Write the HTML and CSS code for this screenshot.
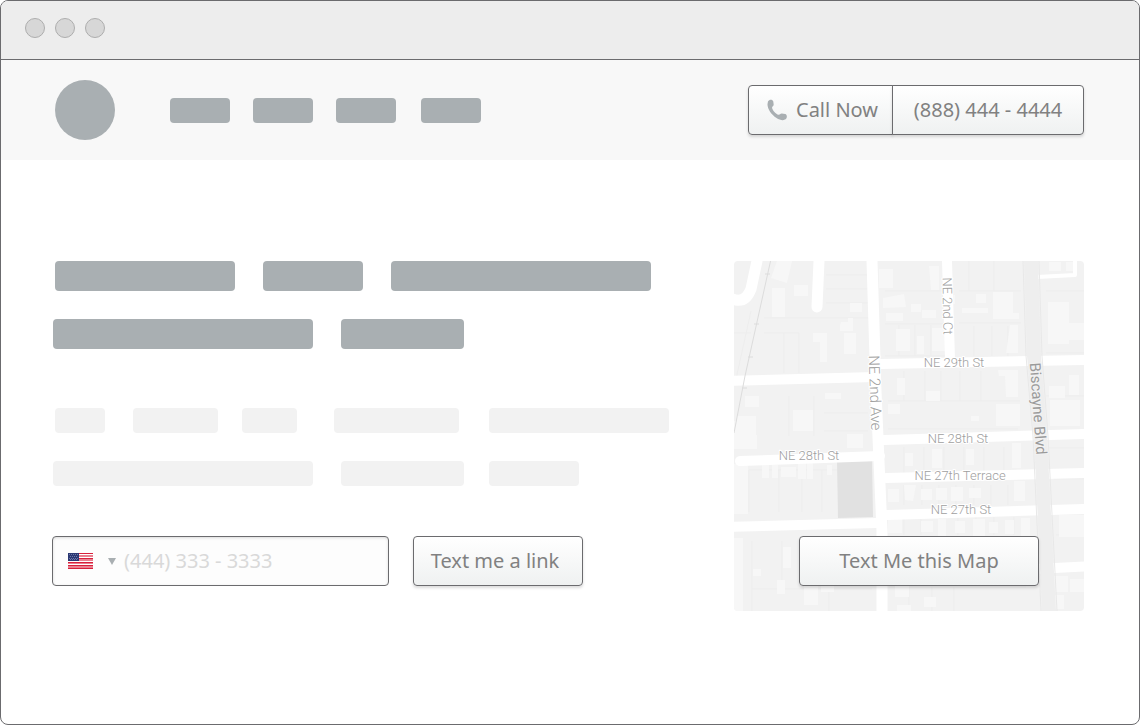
FILE: index.html
```html
<!DOCTYPE html>
<html lang="en">
<head>
<meta charset="utf-8">
<meta name="viewport" content="width=device-width, initial-scale=1">
<title>Text me a link</title>
<link rel="stylesheet" href="styles.css">
</head>
<body>
<div class="window">
  <div class="titlebar"><span class="dot"></span><span class="dot"></span><span class="dot"></span></div>
  <header class="header">
    <div class="logo"></div>
    <div class="nav">
      <span class="bar w60"></span><span class="bar w60"></span><span class="bar w60"></span><span class="bar w60"></span>
    </div>
    <div class="call">
      <button class="btn call-now" type="button">
        <svg class="phone" viewBox="0 0 22 22" aria-hidden="true"><path d="M1 2C2.500-.2 5.800-.3 6.600 2.200L7 5.200C7.100 7 5.300 7 5.300 8.300C5.600 11.500 9.500 15.300 12 16C13.500 16.300 13.500 14.700 15.500 14.700L19 15.300C21.500 16 21.200 19.500 19.500 20.800C17.500 22.300 13.500 21.800 10 19.500C4.500 15.800.5 10 .5 5Z"/></svg>Call Now
      </button>
      <button class="btn number" type="button">(888) 444 - 4444</button>
    </div>
  </header>
  <main class="main">
    <section class="copy">
      <div class="row title-row"><span class="bar w180"></span><span class="bar w100"></span><span class="bar w260"></span></div>
      <div class="row title-row second"><span class="bar w260"></span><span class="bar w123"></span></div>
      <div class="row text-row"><span class="bar w50"></span><span class="bar w85"></span><span class="bar w55"></span><span class="bar w125"></span><span class="bar w180"></span></div>
      <div class="row text-row second"><span class="bar w260"></span><span class="bar w123"></span><span class="bar w90"></span></div>
      <form class="form">
        <div class="field">
          <button class="country" type="button" aria-label="Country: United States">
            <svg class="flag" viewBox="0 0 25 16" aria-hidden="true">
              <path fill="#fff" d="M0 0h25v16H0z"/>
              <path fill="#d9203c" d="M0 0h25v1H0zM0 9h25v1H0zM0 12h25v1H0zM0 15h25v1H0zM11 5h14v1H11z"/>
              <path fill="#e8808f" d="M11 2h14v2H11zM11 6h14v2H11zM0 10h25v1H0zM0 13h25v2H0z"/>
              <path fill="#2b3873" d="M0 0h11v8H0z"/>
              <path stroke="#6f78a8" stroke-dasharray="1 1" d="M1 1.500h9M2 3.500h8M1 5.500h9M2 6.500h8"/>
            </svg>
            <svg class="caret" viewBox="0 0 8 7" aria-hidden="true"><path d="M0 0h8L4 7z"/></svg>
          </button>
          <input class="phone-input" type="tel" placeholder="(444) 333 - 3333" aria-label="Phone number">
        </div>
        <button class="btn link-btn" type="button">Text me a link</button>
      </form>
    </section>
    <section class="map">
      <svg class="map-art" viewBox="0 0 350 350" role="img" aria-label="Street map">
        <path class="land" d="M0 0h350v350H0z"/>
        <path class="pale" d="M0 160h14v14h9v14H0zM0 277h9v73H0zM0 203h14v50H0z"/>
        <path class="lots" d="M0 72h17M30 57h105M30 72h35v40M50 72v40M92 28h45M92 42h45M92 14h45M17 50L2 118M55 135v40M80 135v40M90 152h44M90 170h44M15 209v42M45 209v42M68 209v42M88 209v42M15 209h88M18 280v70M48 280v48M95 278v72M18 328h120M151 30h60M151 63h60M151 95h60M165 64v31M181 64v31M197 64v31M225 30h62M225 62h62M235 0v30M260 0v30M240 65v30M258 65v30M274 65v30M154 140h132M170 110v30M191 110v30M207 110v30M226 110v30M247 110v30M154 168h130M170 186v28M190 186v28M210 186v28M230 186v28M250 186v28M270 186v28M170 224v20M188 224v20M205 224v20M222 224v20M240 224v20M257 224v20M274 224v20M170 256v18M187 256v18M206 256v18M224 256v18M242 256v18M260 256v18M280 256v18M312 30h38M312 92h38M312 135h38M314 187h36M320 218h30M322 274h28M155 326h137M175 326v24M198 326v24M220 326v24"/>
        <path class="building" d="M43 0h15l-5 22-16-5zM60 24h14v11H60zM38 27h13v29H38zM116 42h12v9h-12zM107 61h7v-4h5v13h-13v-6zM110 72h12v21h-12zM79 72h14v29h-7V81h-7zM11 135h14v11H11zM91 132h16v6H91zM59 149h20v21H59zM113 173h16v14h-16zM3 155h19v30H3zM145 8h14v19h-14zM149 37l21-4 2 13-23 1zM152 52h17v8h-17zM162 68h14v22h-14zM183 75h7v18h-7zM198 67h13v23h-13zM177 43h10v8h-10zM188 49h14v8h-14zM195 5h10v24h-8zM212 34h9v9h-9zM228 47h26v5h-26zM242 33h10v9h-10zM259 31h20v21h6v6h-26zM276 64h8v28h-12zM314 41h21v42h-21zM335 62h15v17h-15zM315 1h12v9h-12zM332 1h8v9h-8zM163 117h8v17h-8zM192 130h14v10h-14zM237 155h8v5h-8zM264 109h20v27h-12l-1-21h-6zM262 143h24v22h-24zM315 125h16v12h-16zM335 114h10v20h-10zM316 139h30v26h-30zM154 143h12v10h-12zM171 192h8v13h-8zM198 188h10v19h-10zM232 188h8v16h-8zM278 182h9v25h-9zM28 204h7v13h-7zM38 204h6v13h-6zM47 206h15v10H47zM64 202h8v16h-8zM73 202h6v16h-6zM93 204h5v10h-5zM154 228h11v13h-11zM170 224h12l-3 16-8-1zM187 228h11v11h-11zM202 227h11v12h-11zM217 226h12v14h-12zM235 227h12v10h-12zM280 220h11v20h-11zM154 258h14v14h-14zM187 260h12v11h-12zM204 258h8v17h-8zM221 260h10v12h-10zM239 258h12v17h-12zM255 261h9v11h-9zM271 259h9v14h-9zM287 257h9v18h-9zM325 254h25v22h-25zM49 286h8v21h-8zM19 308h8v7h-8zM43 319h8v14h-8zM70 322h14v22H70zM87 315h13v16H87zM106 308h12v8h-12zM161 322h14v14h-14zM181 315h17v6h-17zM318 315h16v16h-16zM336 318h14v13h-14zM315 334h15v14h-15zM163 344h14v6h-14zM190 336h12v10h-12z"/>
        <path class="park" d="M103 199l35-1 1 58-35 1z"/>
        <g class="streets">
          <path stroke-width="11" d="M23 0L17 28Q12 41 2 39L-2 38M85 0L83 46"/>
          <path stroke-width="11" d="M138 0l4 130 6 140v80" />
          <path stroke-width="10" d="M213 0l3 98M147 103l203-4M6 200l140-5M150 179l200-6M152 217l198-5M153 254l197-6M-5 120l146-4M-5 266l148-4M280 309l80-4"/>
          <path stroke-width="4" d="M303 16l38-2V0"/>
        </g>
        <path class="boulevard" d="M290 0h14l3 95 6 80 9 175h-14l-8-175-7-80z"/>
        <path class="edge" d="M289 0l3 95 7 80 8 175M305 0l3 95 6 80 9 175"/>
        <path class="rail" d="M37-2L11 115 0 172M31 13h5M20 63h5M14 96h5M8 127h5"/>
        <g class="labels">
          <text x="220" y="106">NE 29th St</text>
          <text x="224" y="182">NE 28th St</text>
          <text x="75" y="199">NE 28th St</text>
          <text x="226" y="219">NE 27th Terrace</text>
          <text x="227" y="253">NE 27th St</text>
          <text transform="translate(209 45) rotate(89)">NE 2nd Ct</text>
          <text class="ave" transform="translate(136 132) rotate(88)">NE 2nd Ave</text>
          <text class="blvd" transform="translate(299 148) rotate(86)">Biscayne Blvd</text>
        </g>
      </svg>
      <button class="btn map-btn" type="button">Text Me this Map</button>
    </section>
  </main>
</div>
</body>
</html>
```
FILE: styles.css
```css
* { box-sizing: border-box; }
body { margin: 0; background: #fff; font-family: "Noto Sans", "Open Sans", sans-serif; }
.window { display: flex; flex-direction: column; min-height: 100vh; border: 1px solid #6b6b6e; border-radius: 8px; overflow: hidden; background: #fff; }
.titlebar { display: flex; gap: 10px; height: 59px; padding: 17px 24px; background: #ededed; border-bottom: 1px solid #6b6b6e; }
.dot { width: 20px; height: 20px; border: 1px solid #adadad; border-radius: 50%; background: #d7d7d7; }
.header { display: flex; align-items: center; height: 100px; padding: 0 55px 0 54px; background: #f8f8f8; }
.logo { width: 60px; height: 60px; margin-right: 55px; border-radius: 50%; background: #a9afb2; }
.nav { display: flex; gap: 23px; }
.nav .bar:last-child { margin-left: 2px; }
.bar { display: block; flex: none; height: 25px; border-radius: 4px; background: #a9afb2; }
.w50 { width: 50px; } .w55 { width: 55px; } .w60 { width: 60px; } .w85 { width: 85px; }
.w90 { width: 90px; } .w100 { width: 100px; } .w123 { width: 123px; } .w125 { width: 125px; }
.w180 { width: 180px; } .w260 { width: 260px; }
.btn { height: 50px; padding: 0; border: 1px solid #6b6b6e; border-radius: 4px; background: linear-gradient(#fff, #eff1f1); box-shadow: 0 2px 3px rgba(0, 0, 0, .14); color: #818181; font: 20px/28px "Noto Sans", "Open Sans", sans-serif; white-space: nowrap; }
.call { display: flex; margin-left: auto; }
.call-now { display: flex; align-items: center; justify-content: center; gap: 8px; width: 145px; padding-left: 4px; border-radius: 4px 0 0 4px; }
.number { width: 192px; margin-left: -1px; border-radius: 0 4px 4px 0; }
.phone { width: 21px; height: 22px; fill: #a9afb2; }
.main { display: flex; justify-content: space-between; gap: 24px; padding: 101px 55px 100px 51px; }
.copy { flex: 1; }
.row { display: flex; gap: 28px; padding-left: 3px; }
.row.second { padding-left: 1px; }
.title-row .bar { height: 30px; }
.title-row.second { margin-top: 28px; }
.text-row .bar { background: #f2f2f2; }
.text-row { margin-top: 59px; }
.text-row .w55 { margin: 0 9px 0 -4px; }
.text-row .w125 { margin-right: 2px; }
.text-row.second { margin-top: 28px; }
.text-row.second .w90 { margin-left: -3px; }
.form { display: flex; gap: 24px; margin-top: 50px; }
.field { display: flex; align-items: center; width: 337px; height: 50px; padding-left: 15px; border: 1px solid #6b6b6e; border-radius: 4px; background: #fdfdfd; box-shadow: inset 0 1px 3px rgba(0, 0, 0, .14); }
.country { display: flex; align-items: center; gap: 15px; padding: 0; border: 0; background: none; }
.flag { width: 25px; height: 16px; shape-rendering: crispEdges; }
.caret { width: 8px; height: 7px; fill: #a9afb2; }
.phone-input { flex: 1; min-width: 0; padding: 0 8px; border: 0; outline: 0; background: none; color: #818181; font: 20px/28px "Noto Sans", "Open Sans", sans-serif; }
.phone-input::placeholder { color: #d9d9d9; opacity: 1; }
.link-btn { width: 170px; padding-right: 6px; }
.map { display: grid; flex: none; width: 350px; height: 350px; border-radius: 4px; overflow: hidden; }
.map-art { grid-area: 1 / 1; width: 350px; height: 350px; }
.map-btn { grid-area: 1 / 1; align-self: end; justify-self: center; z-index: 1; width: 240px; margin: 0 0 25px 20px; }
.land { fill: #f2f2f2; }
.pale, .building { fill: #f7f7f7; }
.lots { fill: none; stroke: #ededed; }
.park { fill: #e1e1e1; }
.streets { fill: none; stroke: #fff; stroke-linecap: round; stroke-linejoin: round; }
.boulevard { fill: #eee; }
.edge { fill: none; stroke: #e8e8e8; }
.rail { fill: none; stroke: #dcdcdc; }
.labels { fill: #a0a0a0; font: 300 13px Roboto, sans-serif; text-anchor: middle; stroke: #fff; stroke-width: 2px; paint-order: stroke; }
.ave { font-size: 15px; }
.blvd { font-size: 15px; font-weight: 400; fill: #9a9a9a; stroke: #f2f2f2; }
```
